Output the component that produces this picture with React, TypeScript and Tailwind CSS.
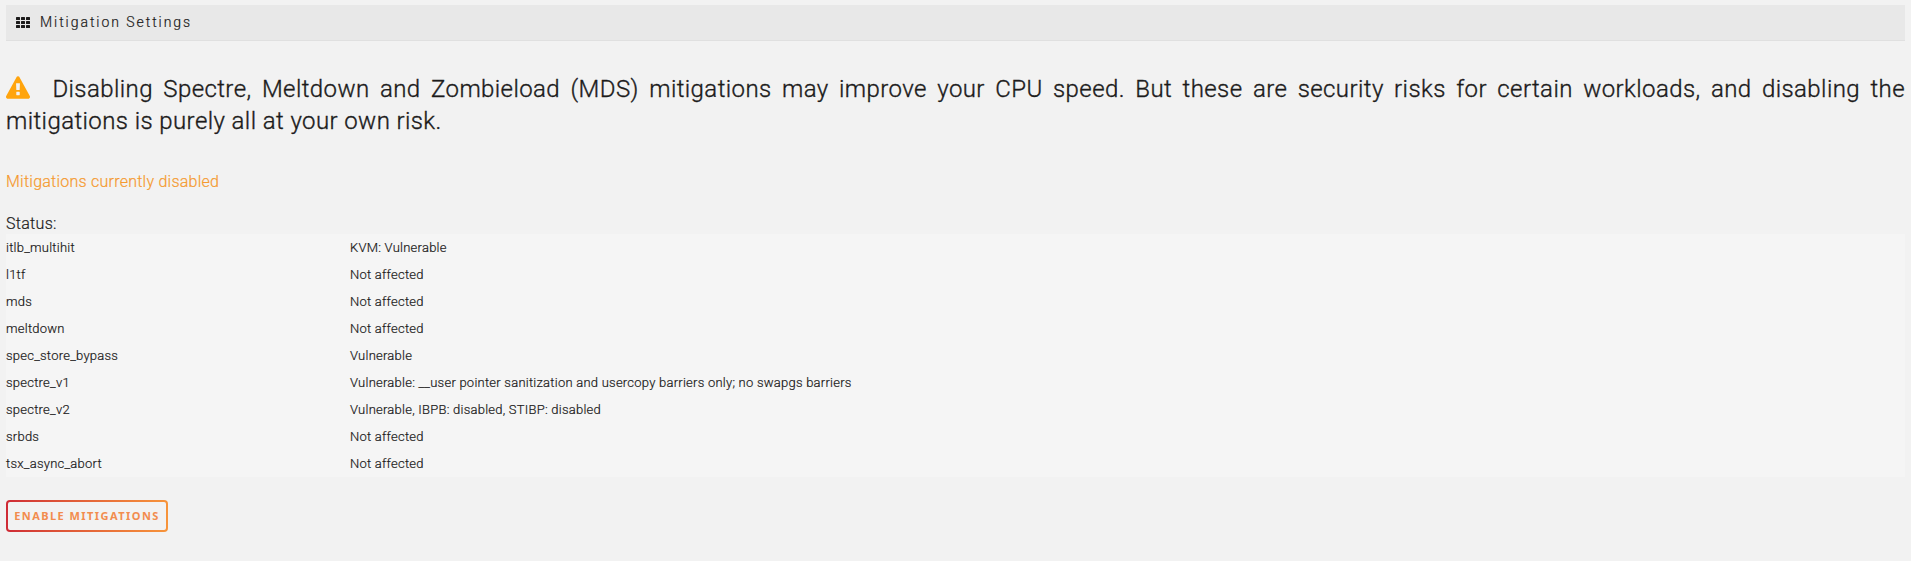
const rows: [string, string][] = [
  ["itlb_multihit", "KVM: Vulnerable"],
  ["l1tf", "Not affected"],
  ["mds", "Not affected"],
  ["meltdown", "Not affected"],
  ["spec_store_bypass", "Vulnerable"],
  ["spectre_v1", "Vulnerable: __user pointer sanitization and usercopy barriers only; no swapgs barriers"],
  ["spectre_v2", "Vulnerable, IBPB: disabled, STIBP: disabled"],
  ["srbds", "Not affected"],
  ["tsx_async_abort", "Not affected"],
];

function GridIcon() {
  return (
    <svg width="14" height="11" viewBox="0 0 14 11" fill="#1c1b1b">
      {[0, 4, 8].map((y) => [0, 5, 10].map((x) => <rect key={`${x}-${y}`} x={x} y={y} width="4" height="3" rx="0.5" />))}
    </svg>
  );
}

function WarningIcon() {
  return (
    <svg className="mr-[12px] inline-block align-[-2px]" width="24" height="23" viewBox="0 0 1792 1664" fill="#ffa40d">
      <path d="M1024 1375v-190q0-14-9.500-23.500t-22.500-9.500h-192q-13 0-22.500 9.500t-9.500 23.500v190q0 14 9.500 23.500t22.500 9.500h192q13 0 22.500-9.500t9.500-23.500zm-2-374l18-459q0-12-10-19-13-11-24-11h-220q-11 0-24 11-10 7-10 21l17 457q0 10 10 16.500t24 6.500h185q14 0 23.500-6.500t10.500-16.500zm-14-934l768 1408q35 63-2 126-17 29-46.500 46t-63.500 17h-1536q-34 0-63.500-17t-46.500-46q-37-63-2-126l768-1408q17-31 47-49t65-18 65 18 47 49z" />
    </svg>
  );
}

export default function App() {
  return (
    <main className="h-[561px] bg-[#f2f2f2] px-[6px] pt-[5px] font-['Roboto',sans-serif] font-light text-[#1c1b1b] [-webkit-text-stroke:0.2px_currentColor]">
      <header className="flex h-9 items-center border-b border-[#e0e0e0] bg-[#e8e8e8] pl-[10px]">
        <GridIcon />
        <h1 className="ml-[10px] mb-px text-[14px] leading-5 font-light tracking-[1.95px]">Mitigation Settings</h1>
      </header>
      <p className="mt-8 text-justify text-[24px] leading-8 tracking-[0.41px] [-webkit-text-stroke:0.35px_currentColor]">
        <WarningIcon /> Disabling Spectre, Meltdown and Zombieload (MDS) mitigations may improve your CPU speed. But these are
        security risks for certain workloads, and disabling the mitigations is purely all at your own risk.
      </p>
      <p className="mt-[33px] text-[16px] leading-6 tracking-[0.24px] text-[#f59a30]">Mitigations currently disabled</p>
      <p className="mt-[18px] h-[22px] text-[16px] leading-6 tracking-[0.3px]">Status:</p>
      <div className="bg-[#f5f5f5] text-[13px] leading-[27px] tracking-[0.24px]">
        {rows.map(([name, status]) => (
          <div key={name} className="flex h-[27px]">
            <span className="w-[344px]">{name}</span>
            <span>{status}</span>
          </div>
        ))}
      </div>
      <button className="mt-[23px] block h-8 w-[162px] rounded-[4px] bg-linear-to-r from-[#cf2a35] to-[#f7943a] p-[2px]">
        <span className="flex h-full items-center justify-center rounded-[2px] bg-[#f2f2f2] pb-px font-['Noto_Sans',sans-serif] text-[11px] font-bold leading-none tracking-[1.45px] whitespace-nowrap text-[#f28c4e] [-webkit-text-stroke:0]">
          ENABLE MITIGATIONS
        </span>
      </button>
    </main>
  );
}
